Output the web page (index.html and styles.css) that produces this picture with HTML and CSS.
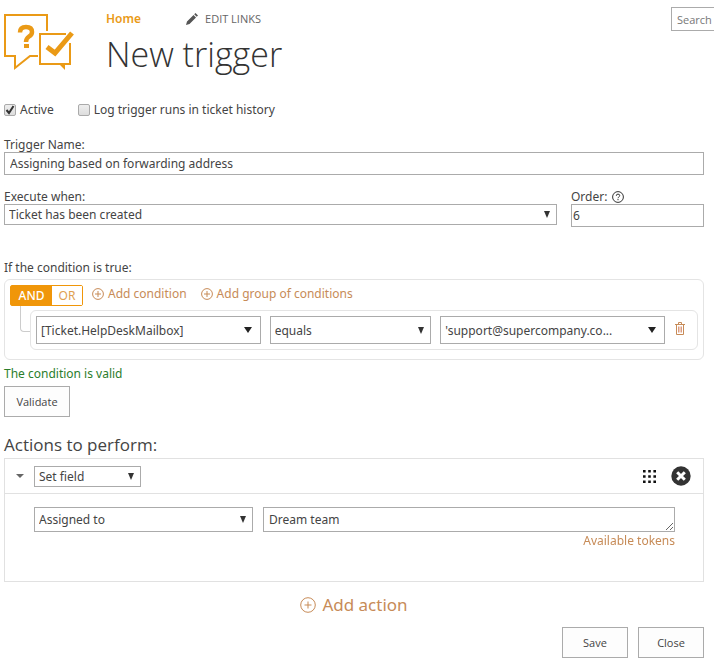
FILE: index.html
```html
<!DOCTYPE html>
<html lang="en">
  <head>
    <meta charset="UTF-8" />
    <meta name="viewport" content="width=device-width, initial-scale=1.0" />
    <title>New trigger</title>
    <link rel="stylesheet" href="styles.css">
  </head>
  <body>
    <header class="header">
      <svg class="logo" viewBox="0 0 70 60" width="70" height="60" fill="none" stroke="#ea9a16" stroke-width="2">
        <path d="M34 43H26L11 55V43H1V2H43V18" />
        <path d="M62 21H36V51H66V30" />
        <path d="M55 51h6v6z" fill="#ea9a16" stroke="none" />
        <path d="M43 34l8 6 17-20" stroke-width="5" />
        <path d="M16 19.500q0-5.500 6-5.500t6 5q0 3-3 4.500-3 2-3 5.500" stroke-width="4.500" />
        <path d="M20 31h5v4h-5z" fill="#ea9a16" stroke="none" />
      </svg>
      <div class="header__main">
        <nav class="topnav">
          <a class="topnav__home" href="#">Home</a>
          <a class="topnav__edit" href="#">
            <svg viewBox="0 0 12 12" width="12" height="12" fill="#555">
              <path d="M0 12l1-3.500 6.500-6.500 2.500 2.500L3.500 11zM8.200 1.300L9.500 0l2.500 2.500-1.300 1.300z" />
            </svg>
            EDIT LINKS
          </a>
        </nav>
        <h1 class="title">New trigger</h1>
      </div>
      <input class="search" type="text" placeholder="Search" aria-label="Search" />
    </header>

    <form class="form">
      <div class="checks">
        <label class="check"><input type="checkbox" checked />Active</label>
        <label class="check"><input type="checkbox" />Log trigger runs in ticket history</label>
      </div>

      <div class="field">
        <label for="triggerName">Trigger Name:</label>
        <input class="control" id="triggerName" type="text" value="Assigning based on forwarding address" />
      </div>

      <div class="row">
        <div class="field field--wide">
          <label for="executeWhen">Execute when:</label>
          <select class="control control--short" id="executeWhen">
            <option>Ticket has been created</option>
          </select>
        </div>
        <div class="field field--order">
          <label for="order">
            Order:
            <svg class="help" viewBox="0 0 12 12" width="12" height="12" fill="none" stroke="#333">
              <circle cx="6" cy="6" r="5.4" />
              <path d="M4.3 4.8q0-1.7 1.7-1.7t1.7 1.5q0 .8-.9 1.4-.8.5-.8 1.2M6 8v1.2" />
            </svg>
          </label>
          <input class="control control--order" id="order" type="text" value="6" />
        </div>
      </div>

      <p class="label">If the condition is true:</p>
      <section class="conditions">
        <div class="conditions__bar">
          <div class="toggle">
            <button class="toggle__item toggle__item--active" type="button">AND</button>
            <button class="toggle__item" type="button">OR</button>
          </div>
          <a class="add" href="#">
            <svg viewBox="0 0 12 12" width="12" height="12" fill="none" stroke="#c78b57">
              <circle cx="6" cy="6" r="5.4" />
              <path d="M6 3v6M3 6h6" />
            </svg>
            Add condition
          </a>
          <a class="add" href="#">
            <svg viewBox="0 0 12 12" width="12" height="12" fill="none" stroke="#c78b57">
              <circle cx="6" cy="6" r="5.4" />
              <path d="M6 3v6M3 6h6" />
            </svg>
            Add group of conditions
          </a>
        </div>
        <div class="conditions__body">
          <span class="branch"></span>
          <div class="condition">
            <select class="control control--tall control--combo" aria-label="Condition field">
              <option>[Ticket.HelpDeskMailbox]</option>
            </select>
            <select class="control control--tall" aria-label="Operator">
              <option>equals</option>
            </select>
            <select class="control control--tall control--combo" aria-label="Value">
              <option>'support@supercompany.co...</option>
            </select>
            <button class="icon-button condition__delete" type="button" aria-label="Delete condition">
              <svg viewBox="0 0 10 13" width="10" height="13" fill="none" stroke="#c78b57">
                <path d="M0 2.5h10M3.5 2V.5h3V2M1.5 3v9.5h7V3" />
                <path d="M3.5 4.5v6M5 4.5v6M6.5 4.5v6" stroke="#dc9c80" />
              </svg>
            </button>
          </div>
        </div>
      </section>
      <p class="valid">The condition is valid</p>
      <button class="button" type="button">Validate</button>

      <h2 class="subtitle">Actions to perform:</h2>
      <section class="action">
        <div class="action__header">
          <button class="icon-button action__collapse" type="button" aria-label="Collapse">
            <svg viewBox="0 0 8 4" width="8" height="4" fill="#666"><path d="M0 0h8L4 4z" /></svg>
          </button>
          <select class="control control--short action__type" aria-label="Action type">
            <option>Set field</option>
          </select>
          <button class="icon-button action__drag" type="button" aria-label="Move">
            <svg viewBox="0 0 13 13" width="13" height="13" fill="none" stroke="#111" stroke-width="2.600" stroke-dasharray="2.600 2.600">
              <path d="M0 1.300h13M0 6.500h13M0 11.700h13" />
            </svg>
          </button>
          <button class="icon-button" type="button" aria-label="Remove action">
            <svg viewBox="0 0 20 20" width="20" height="20">
              <circle cx="10" cy="10" r="9.7" fill="#333" />
              <path d="M6.2 6.2l7.6 7.6M13.8 6.2l-7.6 7.6" stroke="#fff" stroke-width="3" />
            </svg>
          </button>
        </div>
        <div class="action__body">
          <select class="control control--field" aria-label="Field">
            <option>Assigned to</option>
          </select>
          <div class="action__value">
            <textarea class="control control--text" rows="1" aria-label="Value">Dream team</textarea>
            <a class="tokens" href="#">Available tokens</a>
          </div>
        </div>
      </section>

      <a class="add add--action" href="#">
        <svg viewBox="0 0 16 16" width="16" height="16" fill="none" stroke="#c78b57">
          <circle cx="8" cy="8" r="7.3" />
          <path d="M8 4.5v7M4.5 8h7" />
        </svg>
        Add action
      </a>
      <div class="buttons">
        <button class="button" type="button">Save</button>
        <button class="button" type="button">Close</button>
      </div>
    </form>
  </body>
</html>
```

FILE: styles.css
```css
* {
  box-sizing: border-box;
}
body {
  margin: 0;
  padding: 7px 10px 6px 4px;
  background-color: #fff;
  color: #444;
  font-family: "Noto Sans", "Open Sans", sans-serif;
  font-size: 12px;
  line-height: 16px;
}
a {
  text-decoration: none;
}
p,
h1,
h2 {
  margin: 0;
  font-weight: 400;
}
svg {
  display: block;
  flex: none;
}
input,
select,
textarea,
button {
  margin: 0;
  font-family: inherit;
  font-size: inherit;
  color: inherit;
}
.header {
  display: flex;
  align-items: flex-start;
  margin-right: -10px;
  font-family: "Open Sans", sans-serif;
}
.logo {
  margin-top: 6px;
}
.header__main {
  flex: 1;
  margin-left: 32px;
}
.topnav {
  display: flex;
  align-items: center;
  gap: 45px;
  height: 24px;
}
.topnav__home {
  color: #ea9a16;
  font-family: "Noto Sans", sans-serif;
  font-weight: 600;
}
.topnav__edit {
  display: flex;
  align-items: center;
  gap: 7px;
  color: #666;
  font-size: 11px;
}
.title {
  color: #333;
  font-size: 34px;
  font-weight: 300;
  line-height: 46px;
}
.search {
  width: 43px;
  height: 24px;
  padding: 0 0 0 5px;
  border: 1px solid #ababab;
  border-right: 0;
  font-size: 11px;
}
.search::placeholder {
  color: #777;
  opacity: 1;
}
.checks {
  display: flex;
  gap: 24px;
  margin-top: 25px;
}
.check {
  display: flex;
  align-items: center;
  gap: 4px;
}
.check input {
  appearance: none;
  width: 12px;
  height: 12px;
  border: 1px solid #aaa;
  border-radius: 2px;
  background: linear-gradient(#eee, #ddd);
}
.check input:checked {
  background: url("data:image/svg+xml,%3Csvg xmlns='http://www.w3.org/2000/svg' viewBox='0 0 10 10'%3E%3Cpath d='M1.5 5l2.5 3 4.5-7' fill='none' stroke='%23333' stroke-width='2'/%3E%3C/svg%3E"), linear-gradient(#eee, #ddd);
}
.field {
  display: flex;
  flex-direction: column;
  margin-top: 19px;
}
.field label {
  display: flex;
  align-items: center;
  gap: 5px;
  height: 15px;
}
.row {
  display: flex;
  gap: 14px;
  margin-bottom: 33px;
}
.row .field {
  margin-top: 14px;
}
.field--wide {
  flex: 553;
}
.field--order {
  flex: 133;
}
.control {
  width: 100%;
  height: 23px;
  padding: 0 5px;
  border: 1px solid #ababab;
  border-radius: 0;
  background-color: #fff;
}
select.control {
  appearance: none;
  padding: 0 20px 0 4px;
  background-image: url("data:image/svg+xml,%3Csvg xmlns='http://www.w3.org/2000/svg' width='6' height='7'%3E%3Cpath d='M0 0h6L3 7z' fill='%23333'/%3E%3C/svg%3E");
  background-repeat: no-repeat;
  background-position: right 6px center;
}
select.control--short {
  height: 21px;
}
select.control--tall {
  height: 28px;
}
select.control--field {
  height: 25px;
}
select.control--combo {
  background-image: url("data:image/svg+xml,%3Csvg xmlns='http://www.w3.org/2000/svg' width='8' height='6'%3E%3Cpath d='M0 0h8L4 6z' fill='%23222'/%3E%3C/svg%3E");
  background-position: right 8px center;
}
.control--order {
  padding: 0 1px;
}
.control--text {
  display: block;
  height: 25px;
  padding: 4px 5px;
  line-height: 16px;
}
.conditions {
  margin-top: 3px;
  padding: 5px 5px 9px;
  border: 1px solid #e4e4e4;
  border-radius: 6px;
}
.conditions__bar {
  display: flex;
  align-items: flex-start;
  gap: 14px;
}
.toggle {
  display: flex;
  width: 73px;
  height: 21px;
  margin-right: -5px;
  border: 1px solid #f09609;
  border-radius: 2px;
}
.toggle__item {
  flex: 30;
  padding: 0;
  border: 0;
  background-color: #fff;
  color: #e0a050;
}
.toggle__item--active {
  flex: 41;
  background-color: #f09609;
  color: #fff;
  font-weight: 500;
}
.add {
  display: flex;
  align-items: center;
  gap: 4px;
  line-height: 18px;
  color: #c78b57;
}
.conditions__body {
  display: flex;
}
.branch {
  width: 10px;
  height: 26px;
  margin-left: 10px;
  border: 1px solid #ccc;
  border-width: 0 0 1px 1px;
  border-bottom-left-radius: 4px;
}
.condition {
  display: grid;
  grid-template-columns: 225fr 162fr 225fr 12px;
  gap: 9px;
  flex: 1;
  margin-top: 4px;
  padding: 5px 11px 5px 5px;
  border: 1px solid #e4e4e4;
  border-radius: 6px;
}
.icon-button {
  padding: 0;
  border: 0;
  background: none;
  cursor: pointer;
}
.condition__delete {
  padding: 0 1px 4px;
}
.valid {
  margin-top: 6px;
  color: #2b7d2b;
}
.button {
  width: 66px;
  height: 31px;
  margin-top: 4px;
  padding: 0;
  border: 1px solid #ababab;
  background-color: #fdfdfd;
  color: #444;
  font-family: "Open Sans", sans-serif;
  font-size: 11px;
}
.subtitle {
  margin-top: 16px;
  margin-bottom: 1px;
  font-family: "Open Sans", sans-serif;
  font-size: 17px;
  line-height: 24px;
}
.action {
  border: 1px solid #e1e1e1;
}
.action__header {
  display: flex;
  align-items: center;
  height: 35px;
  padding: 0 12px 0 11px;
  border-bottom: 1px solid #e1e1e1;
}
.action__collapse {
  width: 8px;
  margin-right: 10px;
}
.action__type {
  width: 107px;
}
.action__drag {
  margin-right: 15px;
  margin-left: auto;
}
.action__body {
  display: grid;
  grid-template-columns: 219fr 412fr;
  gap: 10px;
  padding: 13px 28px 31px 29px;
}
.tokens {
  display: block;
  color: #c78b57;
  line-height: 18px;
  text-align: right;
}
.add--action {
  justify-content: center;
  gap: 6px;
  margin-top: 11px;
  font-size: 17px;
  line-height: 24px;
}
.buttons {
  display: flex;
  justify-content: flex-end;
  gap: 10px;
  margin-top: 6px;
}
```
